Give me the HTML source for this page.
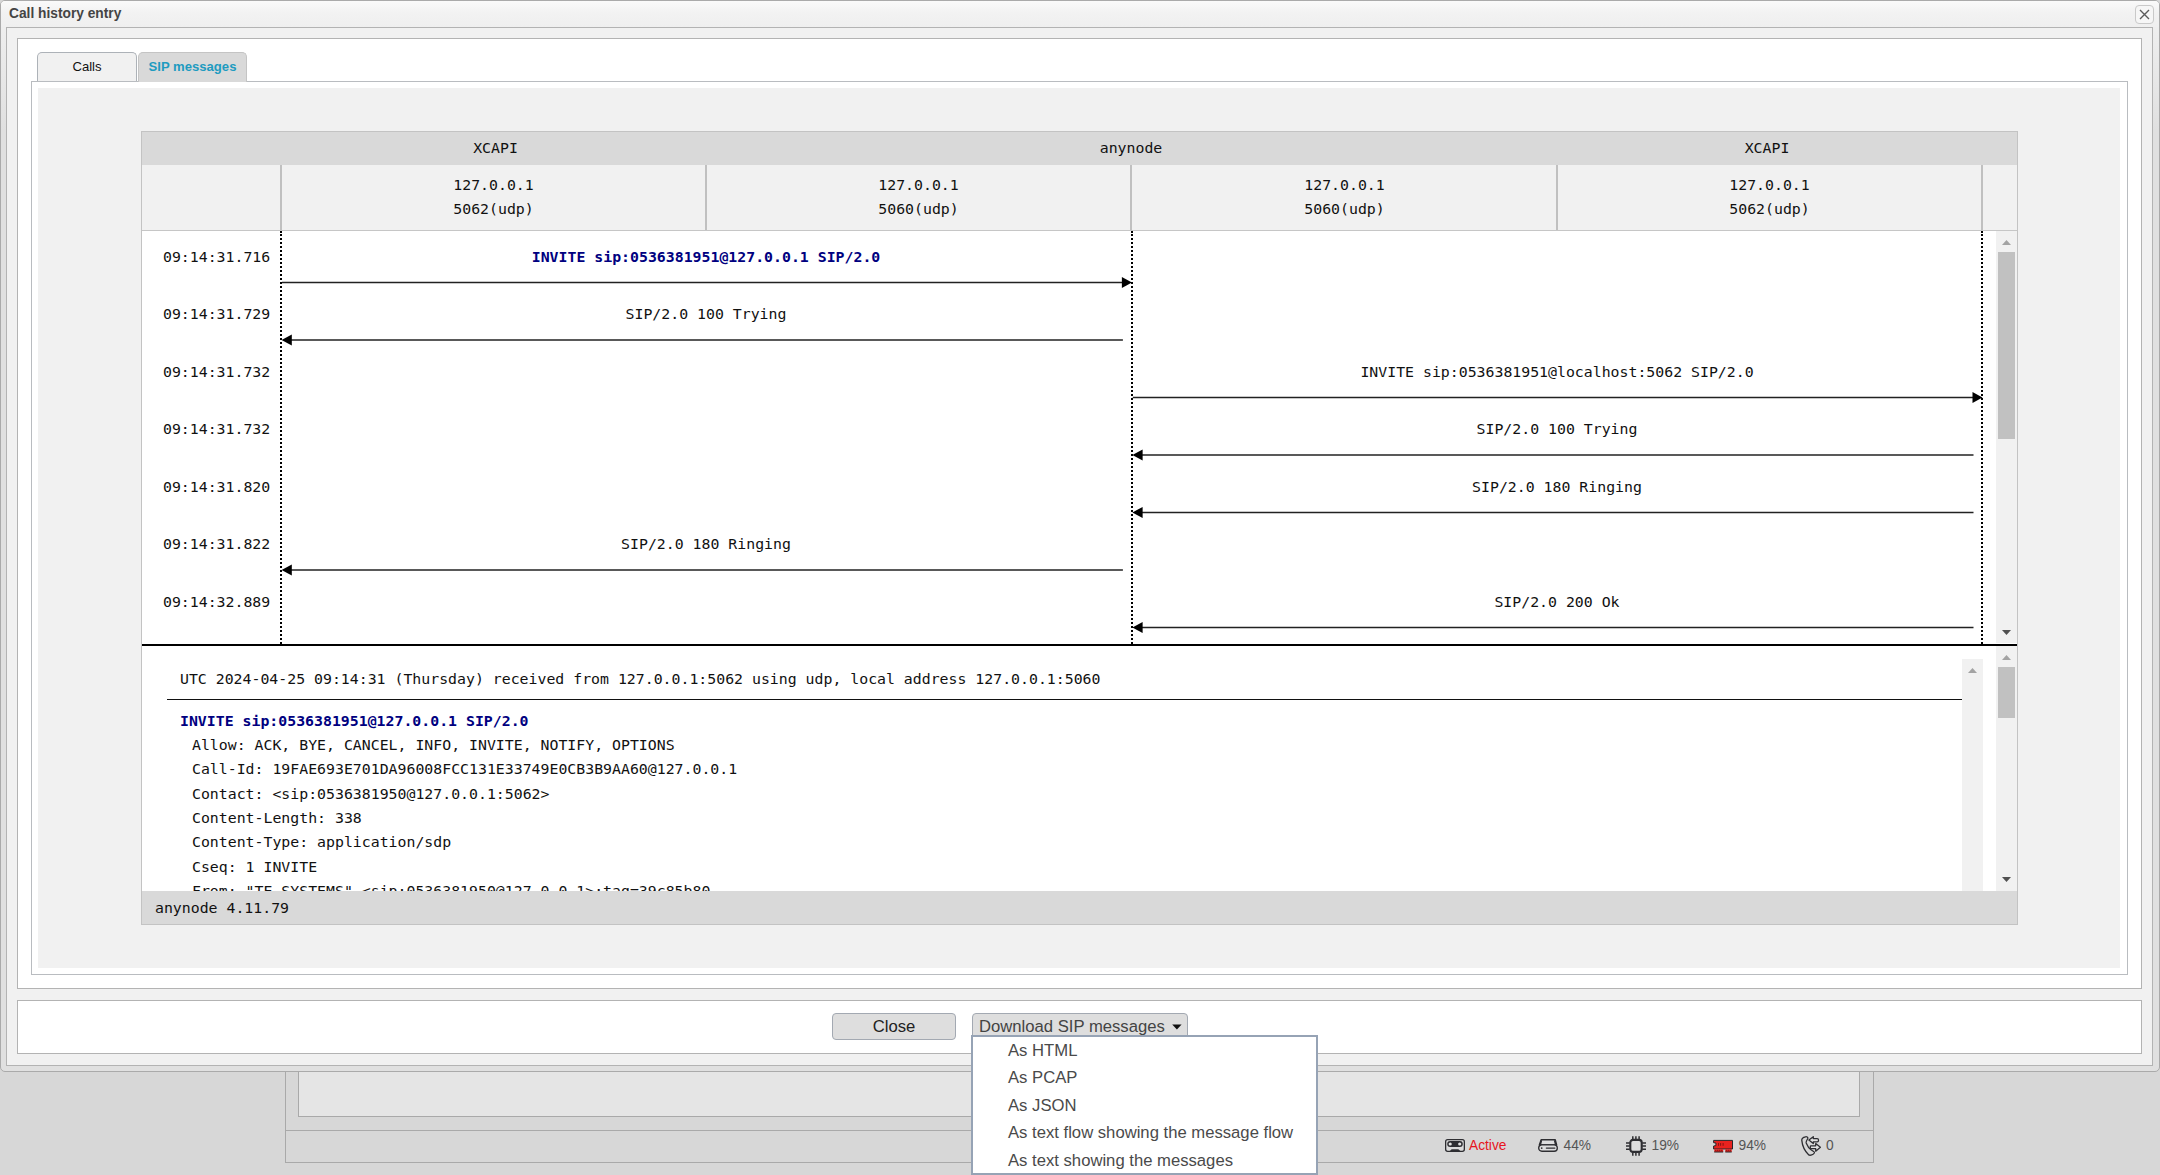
<!DOCTYPE html>
<html lang="en">
<head>
<meta charset="utf-8">
<title>Call history entry</title>
<style>
html,body{margin:0;padding:0;}
body{width:2160px;height:1175px;overflow:hidden;background:#d7d7d7;position:relative;font-family:"Liberation Sans",Arial,sans-serif;font-size:14px;color:#222;}
.abs{position:absolute;box-sizing:border-box;}
.mono{font-family:"DejaVu Sans Mono","Liberation Mono",monospace;font-size:14.85px;color:#111;white-space:pre;line-height:20px;}
.c{text-align:center;}
.navy{color:#000080;font-weight:bold;}
#bgouter{left:285px;top:1000px;width:1589px;height:163px;border:1px solid #a9a9a9;background:#d7d7d7;}
#bginner{left:298px;top:1000px;width:1562px;height:117px;border:1px solid #a9a9a9;background:#e5e5e5;}
#bgline{left:286px;top:1130px;width:1587px;height:1px;background:#a9a9a9;}
.st{top:1138px;height:16px;line-height:16px;font-size:13.75px;color:#555;white-space:pre;}
#dlg{left:0;top:0;width:2160px;height:1072px;border:1px solid #aaa;border-radius:5px;background:linear-gradient(#f2f2f2,#e0e0e0 130px);}
#tbar{left:1px;top:1px;width:2158px;height:26px;border-radius:4px 4px 0 0;background:linear-gradient(#fafafa,#f2f2f2 45%,#efefef);}
#title{left:9px;top:6px;font-weight:bold;font-size:13.75px;line-height:16px;color:#444;}
#xbtn{left:2135px;top:5px;width:19px;height:19px;border:1px solid #c9c9c9;border-radius:4px;background:#f6f6f6;}
#frame{left:6px;top:27px;width:2147px;height:1039px;border:1px solid #b3b3b3;background:#f1f1f1;}
#white{left:17px;top:38px;width:2125px;height:951px;border:1px solid #b3b3b3;background:#fff;}
#btnpanel{left:17px;top:1000px;width:2125px;height:54px;border:1px solid #b3b3b3;background:#fff;}
.tab{top:52px;height:30px;border:1px solid #adb2b8;border-bottom:none;border-radius:5px 5px 0 0;font-size:13.1px;line-height:28px;text-align:center;}
#tab1{left:37px;width:100px;height:29px;background:#f1f1f1;color:#111;}
#tab2{left:138px;width:109px;background:#d9d9d9;color:#1e9bc0;font-weight:bold;border-color:#c4c4c4;}
#tabpanel{left:31px;top:81px;width:2097px;height:894px;border:1px solid #b9bcc0;background:#fff;}
#grey{left:38px;top:88px;width:2082px;height:880px;background:#f1f1f1;}
#tbl{left:141px;top:131px;width:1877px;height:794px;background:#fff;border:1px solid #c3c3c3;}
#h1{left:142px;top:132px;width:1875px;height:33px;background:#d9d9d9;}
#h2{left:142px;top:165px;width:1875px;height:65px;background:#f1f1f1;}
#h2b{left:142px;top:230px;width:1875px;height:1px;background:#c6c6c6;}
.vsep{top:165px;width:2px;height:65px;background:#c0c0c0;}
.dot{top:231px;width:0;height:413px;border-left:2px dotted #000;}
#thick{left:142px;top:644px;width:1875px;height:2px;background:#000;}
#foot{left:142px;top:891px;width:1875px;height:33px;background:#d9d9d9;}
.sb{background:#f1f1f1;}
.thumb{background:#c1c1c1;}
.btn{top:1013px;height:27px;border:1px solid #a3a9b2;border-radius:4px;background:#dedede;font-size:16.67px;line-height:25px;color:#222;white-space:pre;}
#menu{left:971px;top:1035px;width:347px;height:140px;border:2px solid #96a3b5;background:#fff;}
.mi{left:1008px;font-size:16.67px;line-height:20px;color:#4a4a4a;white-space:pre;}
</style>
</head>
<body>
<div class="abs" id="bgouter"></div>
<div class="abs" id="bginner"></div>
<div class="abs" id="bgline"></div>
<svg class="abs" style="left:1445px;top:1139px" width="20" height="13" viewBox="0 0 20 13"><rect x="0.65" y="0.65" width="18.7" height="11.7" rx="2" fill="#dcdcdc" stroke="#2e2e32" stroke-width="1.3"/><rect x="2.2" y="2.1" width="15.6" height="5.8" rx="2.9" fill="#2e2e32"/><circle cx="5.2" cy="5" r="1.6" fill="#e2e2e2"/><circle cx="14.7" cy="5" r="1.6" fill="#e2e2e2"/><path d="M4.6 12.2L6.6 10.2H13.4L15.6 12.2Z" fill="#2e2e32"/></svg>
<div class="abs st" style="left:1469px;color:#e6141e">Active</div>
<svg class="abs" style="left:1538px;top:1139px" width="20" height="13" viewBox="0 0 20 13"><path d="M3.2 0.8H17.2L18.6 6H1.4Z" fill="#dedede" stroke="#2e2e32" stroke-width="1.5" stroke-linejoin="round"/><path d="M3.4 1.4L2.4 5.4M16.6 1.4L17.6 5.4" stroke="#2e2e32" stroke-width="1.6" fill="none"/><rect x="0.7" y="5.9" width="18.6" height="6.4" rx="3.2" fill="#dedede" stroke="#2e2e32" stroke-width="1.4"/><circle cx="3.7" cy="9.1" r="0.9" fill="#2e2e32"/><path d="M8.4 9.1H16.8" stroke="#2e2e32" stroke-width="1.4" stroke-linecap="round" fill="none"/></svg>
<div class="abs st" style="left:1563.5px">44%</div>
<svg class="abs" style="left:1626px;top:1136px" width="20" height="20" viewBox="0 0 20 20"><path d="M6.8 0.2V3.4M9.9 0.2V3.4M13.1 0.2V3.4M6.8 16.4V19.8M9.9 16.4V19.8M13.1 16.4V19.8M0 6.9H3.8M0 10H3.8M0 13.3H3.8M16.2 6.9H20M16.2 10H20M16.2 13.3H20" stroke="#2e2e32" stroke-width="1.5" fill="none"/><rect x="4.3" y="3.9" width="11.4" height="12" rx="2.6" fill="#dedede" stroke="#2e2e32" stroke-width="2.1"/></svg>
<div class="abs st" style="left:1651.5px">19%</div>
<svg class="abs" style="left:1713px;top:1139px" width="20" height="14" viewBox="0 0 20 14"><path d="M0.6 1.4H19.5V10H0.6V7L2.9 6.6V4L0.6 3.7Z" fill="#e8221f" stroke="#26262a" stroke-width="1" stroke-linejoin="round"/><path d="M5.5 4V6.8M7.6 4V6.8M10.1 4V6.8" stroke="#7a1414" stroke-width="0.9" fill="none"/><path d="M1.3 10.2H10.2V13H1.3ZM12.3 10.2H18.7V13H12.3Z" fill="#e8221f"/><path d="M1.2 13H10.2M12.3 13H18.7" stroke="#26262a" stroke-width="1" fill="none"/><path d="M2 11.3H9.6M12.8 11.3H18.2" stroke="#6a1212" stroke-width="0.7" stroke-dasharray="1.2 0.8" fill="none"/></svg>
<div class="abs st" style="left:1738.5px">94%</div>
<svg class="abs" style="left:1801px;top:1136px" width="20" height="20" viewBox="0 0 20 20"><path d="M4.4 0.8C2.5 1.2 0.6 2.6 0.8 4.4C1.3 9.6 4 15.4 7.8 18.9C9.2 19.9 12.5 18.5 13.3 17C13.6 16.4 13.2 15.9 12.6 15.5L10 13.8C8.5 12.8 6.2 9.5 5.2 7C4.9 5.6 5.8 4.2 6.6 2.9C7 2.2 6.8 1.5 6.2 1C5.6 0.7 5 0.6 4.4 0.8Z" fill="none" stroke="#2e2e32" stroke-width="1.3" stroke-linejoin="round"/><path d="M7.9 4.1L12.3 0.7V2.6H16.2Q17.5 2.6 17.5 3.9V4.6Q17.5 5.9 16.2 5.9H12.3V7.6Z" fill="#e2e2e2" stroke="#2e2e32" stroke-width="1.3" stroke-linejoin="round"/><path d="M19.4 11.3L14.7 7.6V9.8H10Q9.3 9.8 9.3 10.5V12Q9.3 12.7 10 12.7H14.7V15.2Z" fill="#e2e2e2" stroke="#2e2e32" stroke-width="1.3" stroke-linejoin="round"/></svg>
<div class="abs st" style="left:1826px">0</div>
<div class="abs" id="dlg"></div>
<div class="abs" id="tbar"></div>
<div class="abs" id="title">Call history entry</div>
<div class="abs" id="xbtn"><svg width="17" height="17" viewBox="0 0 17 17" style="position:absolute;left:0;top:0"><path d="M4 4.1L13 13.1M13 4.1L4 13.1" stroke="#5a5a5a" stroke-width="1.4" fill="none"/></svg></div>
<div class="abs" id="frame"></div>
<div class="abs" id="white"></div>
<div class="abs" id="btnpanel"></div>
<div class="abs" id="tabpanel"></div>
<div class="abs tab" id="tab1">Calls</div>
<div class="abs tab" id="tab2">SIP messages</div>
<div class="abs" id="grey"></div>
<div class="abs" id="tbl"></div>
<div class="abs" id="h1"></div>
<div class="abs" id="h2"></div>
<div class="abs" id="h2b"></div>
<div class="abs vsep" style="left:280px"></div>
<div class="abs vsep" style="left:705px"></div>
<div class="abs vsep" style="left:1130px"></div>
<div class="abs vsep" style="left:1556px"></div>
<div class="abs vsep" style="left:1981px"></div>
<div class="abs mono c" style="left:283px;top:138px;width:425px">XCAPI</div>
<div class="abs mono c" style="left:707px;top:138px;width:848px">anynode</div>
<div class="abs mono c" style="left:1558px;top:138px;width:418px">XCAPI</div>
<div class="abs mono c" style="left:282px;top:175px;width:423px">127.0.0.1</div>
<div class="abs mono c" style="left:282px;top:199px;width:423px">5062(udp)</div>
<div class="abs mono c" style="left:707px;top:175px;width:423px">127.0.0.1</div>
<div class="abs mono c" style="left:707px;top:199px;width:423px">5060(udp)</div>
<div class="abs mono c" style="left:1133px;top:175px;width:423px">127.0.0.1</div>
<div class="abs mono c" style="left:1133px;top:199px;width:423px">5060(udp)</div>
<div class="abs mono c" style="left:1558px;top:175px;width:423px">127.0.0.1</div>
<div class="abs mono c" style="left:1558px;top:199px;width:423px">5062(udp)</div>
<div class="abs dot" style="left:280px"></div>
<div class="abs dot" style="left:1131px"></div>
<div class="abs dot" style="left:1981px"></div>
<div class="abs mono" style="left:163px;top:247px">09:14:31.716</div>
<div class="abs mono c navy" style="left:281.5px;top:247px;width:849px">INVITE sip:0536381951@127.0.0.1 SIP/2.0</div>
<div class="abs mono" style="left:163px;top:304px">09:14:31.729</div>
<div class="abs mono c" style="left:281.5px;top:304px;width:849px">SIP/2.0 100 Trying</div>
<div class="abs mono" style="left:163px;top:362px">09:14:31.732</div>
<div class="abs mono c" style="left:1132.5px;top:362px;width:849px">INVITE sip:0536381951@localhost:5062 SIP/2.0</div>
<div class="abs mono" style="left:163px;top:419px">09:14:31.732</div>
<div class="abs mono c" style="left:1132.5px;top:419px;width:849px">SIP/2.0 100 Trying</div>
<div class="abs mono" style="left:163px;top:477px">09:14:31.820</div>
<div class="abs mono c" style="left:1132.5px;top:477px;width:849px">SIP/2.0 180 Ringing</div>
<div class="abs mono" style="left:163px;top:534px">09:14:31.822</div>
<div class="abs mono c" style="left:281.5px;top:534px;width:849px">SIP/2.0 180 Ringing</div>
<div class="abs mono" style="left:163px;top:592px">09:14:32.889</div>
<div class="abs mono c" style="left:1132.5px;top:592px;width:849px">SIP/2.0 200 Ok</div>
<svg class="abs" style="left:0;top:0" width="2160" height="660" viewBox="0 0 2160 660"><path d="M282.0 282.4H1122.9" stroke="#222" stroke-width="1.55" fill="none"/><path d="M1131.9 282.4L1121.9 276.9V287.9Z" fill="#000"/><path d="M290.2 339.9H1122.9" stroke="#222" stroke-width="1.55" fill="none"/><path d="M281.6 339.9L291.8 334.4V345.4Z" fill="#000"/><path d="M1132.8 397.4H1973.5" stroke="#222" stroke-width="1.55" fill="none"/><path d="M1982.5 397.4L1972.5 391.9V402.9Z" fill="#000"/><path d="M1141.0 454.9H1973.5" stroke="#222" stroke-width="1.55" fill="none"/><path d="M1132.4 454.9L1142.6 449.4V460.4Z" fill="#000"/><path d="M1141.0 512.4H1973.5" stroke="#222" stroke-width="1.55" fill="none"/><path d="M1132.4 512.4L1142.6 506.9V517.9Z" fill="#000"/><path d="M290.2 569.9H1122.9" stroke="#222" stroke-width="1.55" fill="none"/><path d="M281.6 569.9L291.8 564.4V575.4Z" fill="#000"/><path d="M1141.0 627.4H1973.5" stroke="#222" stroke-width="1.55" fill="none"/><path d="M1132.4 627.4L1142.6 621.9V632.9Z" fill="#000"/></svg>
<div class="abs sb" style="left:1996px;top:231px;width:21px;height:412px"></div>
<div class="abs thumb" style="left:1998px;top:252px;width:17px;height:187px"></div>
<svg class="abs" style="left:1996px;top:231px" width="21" height="412"><path d="M6 14L10.5 9L15 14Z" fill="#a3a3a3"/><path d="M6 399L15 399L10.5 404Z" fill="#505050"/></svg>
<div class="abs" id="thick"></div>
<div class="abs" style="left:142px;top:646px;width:1875px;height:245px;overflow:hidden">
<div class="abs mono" style="left:38px;top:23px">UTC 2024-04-25 09:14:31 (Thursday) received from 127.0.0.1:5062 using udp, local address 127.0.0.1:5060</div>
<div class="abs" style="left:25px;top:53px;width:1795px;height:1px;background:#111"></div>
<div class="abs mono navy" style="left:38px;top:65px">INVITE sip:0536381951@127.0.0.1 SIP/2.0</div>
<div class="abs mono" style="left:50px;top:89px">Allow: ACK, BYE, CANCEL, INFO, INVITE, NOTIFY, OPTIONS</div>
<div class="abs mono" style="left:50px;top:113px">Call-Id: 19FAE693E701DA96008FCC131E33749E0CB3B9AA60@127.0.0.1</div>
<div class="abs mono" style="left:50px;top:138px">Contact: &lt;sip:0536381950@127.0.0.1:5062&gt;</div>
<div class="abs mono" style="left:50px;top:162px">Content-Length: 338</div>
<div class="abs mono" style="left:50px;top:186px">Content-Type: application/sdp</div>
<div class="abs mono" style="left:50px;top:211px">Cseq: 1 INVITE</div>
<div class="abs mono" style="left:50px;top:235px">From: "TE-SYSTEMS" &lt;sip:0536381950@127.0.0.1&gt;;tag=39c85b80</div>
<div class="abs sb" style="left:1820px;top:13px;width:21px;height:232px"></div>
<svg class="abs" style="left:1820px;top:13px" width="21" height="30"><path d="M6 14L10.5 9L15 14Z" fill="#a3a3a3"/></svg>
<div class="abs sb" style="left:1854px;top:0;width:21px;height:245px"></div>
<div class="abs thumb" style="left:1856px;top:21px;width:17px;height:51px"></div>
<svg class="abs" style="left:1854px;top:0" width="21" height="245"><path d="M6 14L10.5 9L15 14Z" fill="#a3a3a3"/><path d="M6 231L15 231L10.5 236Z" fill="#505050"/></svg>
</div>
<div class="abs" id="foot"></div>
<div class="abs mono" style="left:155px;top:898px">anynode 4.11.79</div>
<div class="abs btn c" style="left:832px;width:124px">Close</div>
<div class="abs btn" style="left:972px;width:216px;color:#444;padding-left:6px">Download SIP messages<svg class="abs" style="left:198px;top:8px" width="12" height="10"><path d="M1.2 2.4H10.6L5.9 7.6Z" fill="#111"/></svg></div>
<div class="abs" id="menu"></div>
<div class="abs mi" style="top:1041px">As HTML</div>
<div class="abs mi" style="top:1068px">As PCAP</div>
<div class="abs mi" style="top:1096px">As JSON</div>
<div class="abs mi" style="top:1123px">As text flow showing the message flow</div>
<div class="abs mi" style="top:1151px">As text showing the messages</div>
</body>
</html>
